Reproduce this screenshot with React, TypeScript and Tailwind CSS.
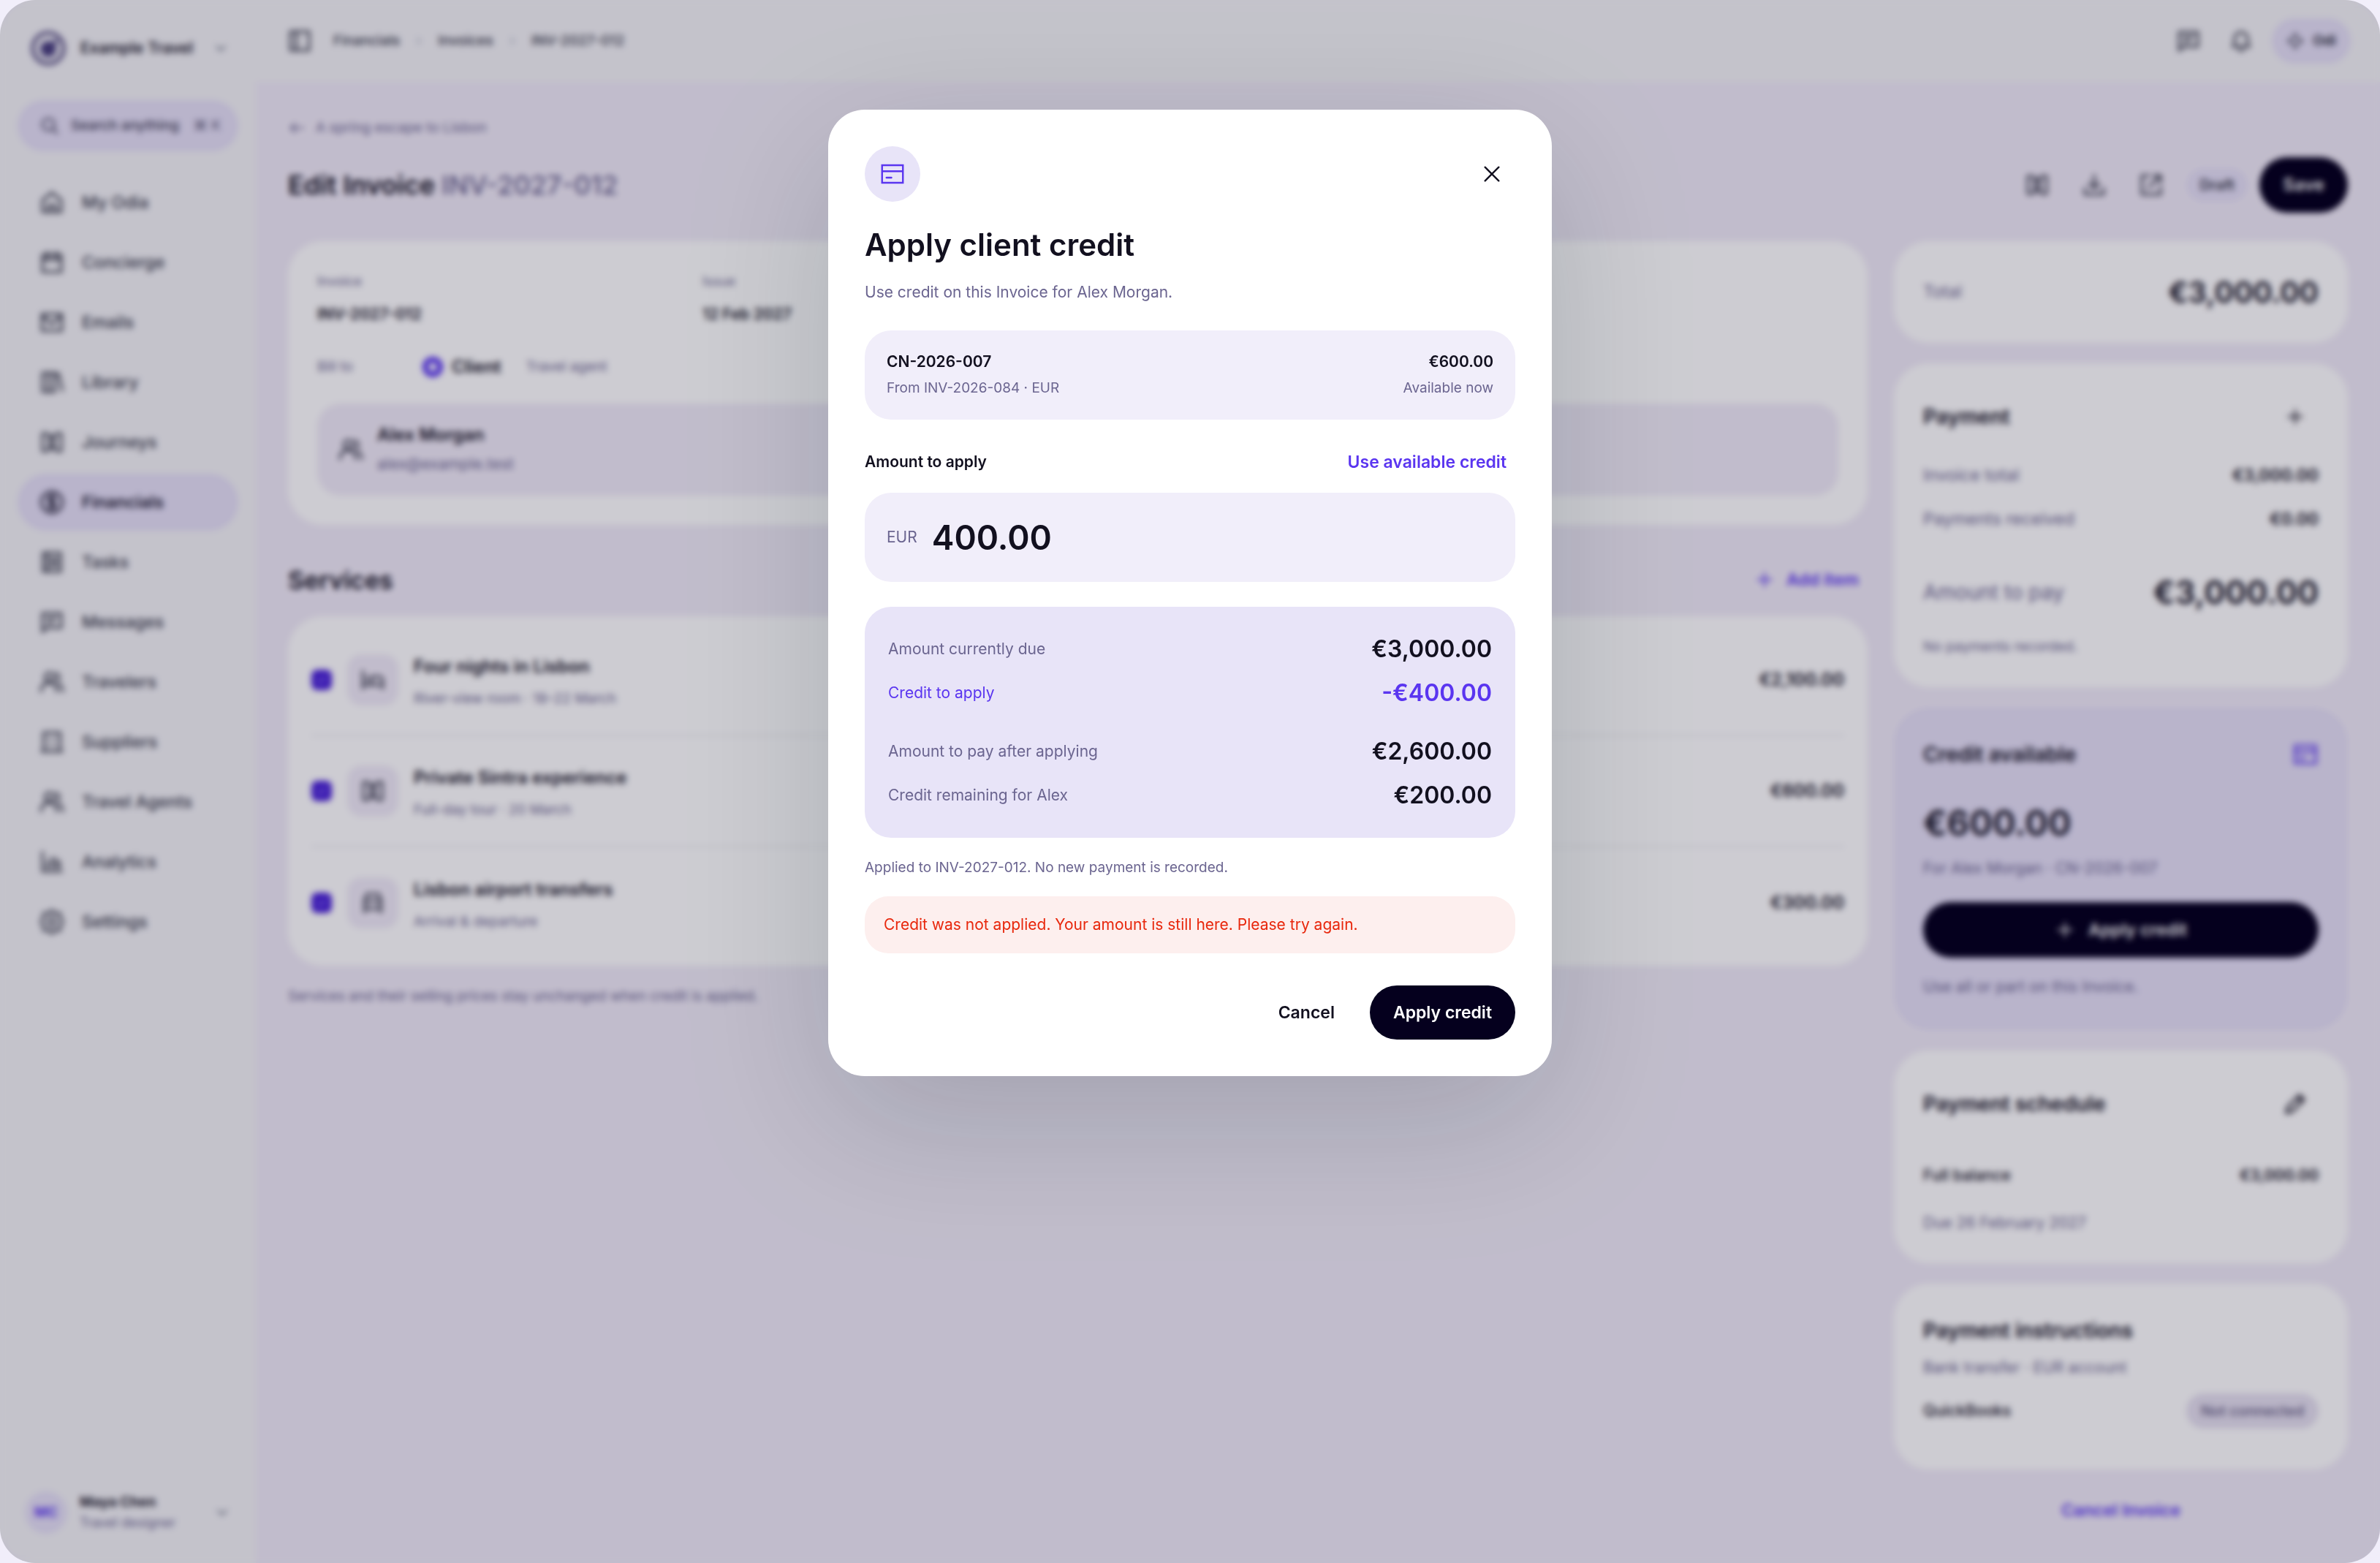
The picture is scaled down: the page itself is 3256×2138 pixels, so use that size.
import { useState } from 'react';
import type { ReactNode } from 'react';

const ICONS = {
  home: 'M3.5 10 12 3l8.5 7v10.5h-17zM9 20.5v-6h6v6',
  calendar: 'M3.5 5h17v15.5h-17zM3.5 9.5h17M8 2.5v4.5M16 2.5v4.5',
  mail: 'M3 4.5h18v15H3zM3 6l9 7.5L21 6',
  library: 'M3.5 3.5H9v17H3.5zM9 3.5h5.5v17H9zM15 5l3-1 3.5 15.5',
  map: 'M3.5 4H8l4 4 4-4h4.5v16H16l-4-4-4 4H3.5zM10 6v12M14 6v12',
  dollar: 'M12 2.5a9.5 9.5 0 1 0 0 19 9.5 9.5 0 0 0 0-19zM15 8.5c-.6-.9-1.7-1.4-3-1.4-1.7 0-3 .9-3 2.3 0 3.3 6 1.8 6 5 0 1.5-1.3 2.5-3 2.5-1.4 0-2.5-.6-3.1-1.5M12 5.5v13',
  tasks: 'M4 3.5h16v17H4zM8 3.5v17M11 8.5h6M11 12h6M11 15.5h6',
  message: 'M3.5 4h17v13H8l-4.5 3.5zM8 8.5h8M8 12.5h5',
  users: 'M9.5 3.5a4 4 0 1 0 0 8 4 4 0 0 0 0-8zM2 20.5c.5-5 2.5-8 7.5-8s7 3 7 8M15.5 3.8a4 4 0 0 1 1 7.4M18.5 13.5c2 1.3 3 3.500 3.500 7',
  building: 'M4.5 3.5h15v17h-15zM2.5 20.5h19M9.5 8v.1M14.5 8v.1M9.5 12v.1M14.5 12v.1M9.5 16v.1M14.5 16v.1',
  chart: 'M3.5 3v17.5H21M8 17v-5M12 17V8M16 17v-8M19 17v-5',
  settings: 'M12 1.5l2.8 2.9 4.5-.4.7 4.5 2 3.5-2 3.5-.7 4.5-4.5-.4L12 22.5l-2.8-2.9-4.5.4L4 15.5 2 12l2-3.5L4.7 4l4.5.4zM12 8.5a3.5 3.5 0 1 0 0 7 3.5 3.5 0 0 0 0-7z',
  search: 'M10.5 3.5a7 7 0 1 0 0 14 7 7 0 0 0 0-14zM15.5 15.5l5.5 5.5',
  chevronDown: 'M6 9l6 6 6-6',
  chevronRight: 'M9 6l6 6-6 6',
  panel: 'M3.5 3.5h17v17h-17zM9 3.5v17',
  bell: 'M6 17V10a6 6 0 0 1 12 0v7M4 17h16M10 20.5h4',
  sparkle: 'M12 2l3.500 6.500L22 12l-6.500 3.500L12 22l-3.500-6.500L2 12l6.500-3.500z',
  arrowLeft: 'M21 12H4M10 6l-6 6 6 6',
  download: 'M12 3v12M7.5 10.5 12 15l4.5-4.5M3.5 15v5.5h17V15',
  external: 'M10 3.5H3.5v17h17V14M14 3.5h6.5V10M20.5 3.5 10 14',
  plus: 'M12 4v16M4 12h16',
  bed: 'M3 4v16M3 16.5h18M21 20v-7.5c0-2-1-3.5-3.5-3.5H11v7.5M7 9.5v3',
  car: 'M4.5 20.5V9l2-5h11l2 5v11.5M4.5 10h15M4.5 17.5h15M8 13.8v.1M16 13.8v.1',
  pencil: 'M4 20l1-5L16 4l4 4L9 19zM14 6l4 4',
  close: 'M4 4l16 16M20 4 4 20',
  check: 'M6 12.5l4 4 8-9',
  card: 'M2.5 4h19v16h-19zM2.5 9.5h19M6.5 15.3H11',
};

type IconName = keyof typeof ICONS;

function Icon({ name, className, strokeWidth = 2 }: { name: IconName; className: string; strokeWidth?: number }) {
  return (
    <svg
      viewBox="0 0 24 24"
      fill="none"
      stroke="currentColor"
      strokeWidth={strokeWidth}
      strokeLinecap="round"
      className={`shrink-0 ${className}`}
      aria-hidden="true"
    >
      <path d={ICONS[name]} />
    </svg>
  );
}

const NAV: { label: string; icon: IconName }[] = [
  { label: 'My Odia', icon: 'home' },
  { label: 'Concierge', icon: 'calendar' },
  { label: 'Emails', icon: 'mail' },
  { label: 'Library', icon: 'library' },
  { label: 'Journeys', icon: 'map' },
  { label: 'Financials', icon: 'dollar' },
  { label: 'Tasks', icon: 'tasks' },
  { label: 'Messages', icon: 'message' },
  { label: 'Travelers', icon: 'users' },
  { label: 'Suppliers', icon: 'building' },
  { label: 'Travel Agents', icon: 'users' },
  { label: 'Analytics', icon: 'chart' },
  { label: 'Settings', icon: 'settings' },
];

const SERVICES: { title: string; detail: string; price: string; icon: IconName }[] = [
  { title: 'Four nights in Lisbon', detail: 'River-view room · 18–22 March', price: '€2,100.00', icon: 'bed' },
  { title: 'Private Sintra experience', detail: 'Full-day tour · 20 March', price: '€600.00', icon: 'map' },
  { title: 'Lisbon airport transfers', detail: 'Arrival & departure', price: '€300.00', icon: 'car' },
];

function Sidebar() {
  return (
    <aside className="flex w-[350px] shrink-0 flex-col bg-[#f4f4f7] px-6 pt-[42px] pb-10">
      <button className="flex h-12 items-center pl-[18px] text-left">
        <svg viewBox="0 0 48 48" className="size-12 shrink-0" aria-hidden="true">
          <circle cx="24" cy="24" r="21" fill="none" stroke="#5b5285" strokeWidth="5" />
          <circle cx="24" cy="25" r="11" fill="#4b4180" />
          <path d="M24 25 36 13" stroke="#4b4180" strokeWidth="5" />
        </svg>
        <span className="ml-5 text-[21px] leading-8 font-semibold text-[#1c1a2b]">Example Travel</span>
        <Icon name="chevronDown" className="ml-auto mr-3 size-6 text-gray-500" />
      </button>

      <button className="mt-[47px] flex h-[70px] items-center rounded-full bg-[#e6e1f7] pl-[30px] pr-6 text-[#3a3850]">
        <Icon name="search" className="size-7" />
        <span className="ml-[15px] text-[19px] font-medium whitespace-nowrap">Search anything</span>
        <span className="ml-auto text-[19px] text-[#5b5875]">⌘ K</span>
      </button>

      <nav className="mt-[31px] flex flex-col gap-1">
        {NAV.map((item) => (
          <a
            key={item.label}
            href="#"
            className={
              item.label === 'Financials'
                ? 'flex h-[78px] items-center gap-[23px] rounded-full bg-[#e6e1f7] pl-[29px] text-[23px] font-semibold text-[#1c1a30]'
                : 'flex h-[78px] items-center gap-[23px] rounded-full pl-[29px] text-[23px] font-medium text-[#363848]'
            }
          >
            <Icon name={item.icon} className="size-9" />
            {item.label}
          </a>
        ))}
      </nav>

      <button className="mt-auto flex items-center pl-[10px] text-left">
        <span className="flex size-[58px] items-center justify-center rounded-full bg-[#e6e1f7] text-[19px] font-bold text-[#5a35f0]">
          MC
        </span>
        <span className="ml-[17px] flex flex-col">
          <span className="text-[19px] leading-7 font-bold text-[#1c1a2b]">Maya Chen</span>
          <span className="text-lg leading-7 text-[#6b6590]">Travel designer</span>
        </span>
        <Icon name="chevronDown" className="ml-auto mr-[10px] size-6 text-gray-500" />
      </button>
    </aside>
  );
}

function TopBar() {
  return (
    <header className="flex h-28 shrink-0 items-center bg-[#f4f4f7] pl-[42px] pr-10 text-[#363848]">
      <button aria-label="Toggle sidebar">
        <Icon name="panel" className="size-9" />
      </button>
      <nav className="ml-7 flex items-center gap-[18px] text-[19px] font-medium">
        <a href="#">Financials</a>
        <Icon name="chevronRight" className="size-4 text-gray-400" />
        <a href="#">Invoices</a>
        <Icon name="chevronRight" className="size-4 text-gray-400" />
        <a href="#">INV-2027-012</a>
      </nav>
      <div className="ml-auto flex items-center gap-9">
        <button aria-label="Messages">
          <Icon name="message" className="size-9" />
        </button>
        <button aria-label="Notifications">
          <Icon name="bell" className="size-9" />
        </button>
        <button className="-ml-3 flex h-[62px] items-center gap-3 rounded-full bg-[#e6e1f7] px-5 text-[19px] font-bold">
          <Icon name="sparkle" className="size-6" />
          Odi
        </button>
      </div>
    </header>
  );
}

function Card({ className, children }: { className: string; children: ReactNode }) {
  return <section className={`flex flex-col rounded-[48px] px-10 ${className}`}>{children}</section>;
}

function InvoiceCard() {
  return (
    <Card className="bg-white py-10">
      <dl className="grid grid-cols-4 gap-[27px]">
        <div>
          <dt className="text-lg leading-[30px] text-[#6b6590]">Invoice</dt>
          <dd className="mt-3 text-[21px] leading-9 font-semibold">INV-2027-012</dd>
        </div>
        <div>
          <dt className="text-lg leading-[30px] text-[#6b6590]">Issue</dt>
          <dd className="mt-3 text-[21px] leading-9 font-semibold">12 Feb 2027</dd>
        </div>
      </dl>
      <div role="radiogroup" aria-labelledby="bill-to" className="mt-9 flex h-9 items-center">
        <span id="bill-to" className="w-[144px] text-[19px] text-[#6b6590]">
          Bill to
        </span>
        <label className="flex items-center gap-3 text-2xl font-semibold">
          <input
            type="radio"
            name="billTo"
            defaultChecked
            className="size-7 appearance-none rounded-full border-[8px] border-[#5a35f0] bg-white"
          />
          Client
        </label>
        <label className="relative ml-[34px] text-[19px] text-[#6b6590]">
          <input type="radio" name="billTo" className="sr-only" />
          Travel agent
        </label>
      </div>
      <div className="mt-8 flex h-[126px] items-center gap-[18px] rounded-[32px] bg-[#f1ecf8] pl-7">
        <Icon name="users" className="size-9 text-[#363848]" />
        <div>
          <p className="text-2xl leading-10 font-semibold">Alex Morgan</p>
          <p className="text-[21px] leading-10 text-[#6b6590]">alex@example.test</p>
        </div>
      </div>
    </Card>
  );
}

function Services() {
  return (
    <>
      <div className="mt-[45px] flex h-[60px] items-center justify-between">
        <h2 className="text-[34px] font-semibold">Services</h2>
        <button className="mr-3 flex items-center gap-4 text-[23px] font-semibold text-[#5a35f0]">
          <Icon name="plus" className="size-7" />
          Add item
        </button>
      </div>
      <ul className="mt-5 flex flex-col divide-y-2 divide-[#ebebf0] rounded-[48px] bg-white px-8 pt-3 pb-[10px]">
        {SERVICES.map((item) => (
          <li key={item.title} className="flex h-[152px] items-center">
            <span className="relative flex shrink-0">
              <input
                type="checkbox"
                defaultChecked
                aria-label={item.title}
                className="peer size-7 appearance-none rounded-lg border-2 border-[#4a22d8] checked:bg-[#4a22d8]"
              />
              <Icon
                name="check"
                className="pointer-events-none absolute inset-1 hidden size-5 text-[#a897f5] peer-checked:block"
              />
            </span>
            <span className="ml-[21px] flex size-[70px] shrink-0 items-center justify-center rounded-[20px] bg-[#f1ecf8] text-[#363848]">
              <Icon name={item.icon} className="size-9" />
            </span>
            <div className="ml-[21px] pt-2">
              <p className="text-2xl leading-10 font-semibold">{item.title}</p>
              <p className="mt-1 text-[19px] leading-10 text-[#6b6590]">{item.detail}</p>
            </div>
            <span className="ml-auto text-2xl font-semibold">{item.price}</span>
          </li>
        ))}
      </ul>
      <p className="mt-[27px] text-[19px] leading-[30px] text-[#6b6590]">
        Services and their selling prices stay unchanged when credit is applied.
      </p>
    </>
  );
}

function SidePanel() {
  return (
    <aside className="flex w-[621px] shrink-0 flex-col gap-7">
      <Card className="bg-white">
        <div className="flex h-[139px] items-center justify-between">
          <span className="text-[23px] text-[#6b6590]">Total</span>
          <span className="text-[40px] font-semibold">€3,000.00</span>
        </div>
      </Card>

      <Card className="bg-white pt-[45px] pb-10">
        <div className="flex h-14 items-center justify-between">
          <h2 className="text-[28px] font-semibold">Payment</h2>
          <button aria-label="Add payment" className="mr-[18px]">
            <Icon name="plus" className="size-7" />
          </button>
        </div>
        <div className="mt-8 flex h-10 items-center justify-between">
          <span className="text-[23px] text-[#6b6590]">Invoice total</span>
          <span className="text-[23px] font-semibold">€3,000.00</span>
        </div>
        <div className="mt-5 flex h-10 items-center justify-between">
          <span className="text-[23px] text-[#6b6590]">Payments received</span>
          <span className="text-[23px] font-semibold">€0.00</span>
        </div>
        <div className="mt-[50px] flex h-[60px] items-center justify-between">
          <span className="text-[28px] text-[#6b6590]">Amount to pay</span>
          <span className="text-[44px] font-semibold">€3,000.00</span>
        </div>
        <p className="mt-[30px] text-[19px] leading-[30px] text-[#6b6590]">No payments recorded.</p>
      </Card>

      <Card className="bg-[#e6e1f7] pt-9 pb-11">
        <div className="flex h-14 items-center justify-between">
          <h2 className="text-[28px] font-semibold">Credit available</h2>
          <Icon name="card" className="size-9 text-[#5a35f0]" />
        </div>
        <p className="mt-[34px] text-5xl leading-[64px] font-semibold">€600.00</p>
        <p className="mt-[15px] text-[21px] leading-[30px] text-[#6b6590]">For Alex Morgan · CN-2026-007</p>
        <button className="mt-[31px] flex h-[76px] items-center justify-center gap-[18px] rounded-full bg-[#05001e] text-[23px] font-semibold text-white">
          <Icon name="plus" className="size-7" />
          Apply credit
        </button>
        <p className="mt-[25px] text-[21px] leading-[30px] text-[#6b6590]">Use all or part on this Invoice.</p>
      </Card>

      <Card className="bg-white pt-[45px] pb-10">
        <div className="flex h-14 items-center justify-between">
          <h2 className="text-[28px] font-semibold">Payment schedule</h2>
          <button aria-label="Edit schedule" className="mr-[14px]">
            <Icon name="pencil" className="size-9" />
          </button>
        </div>
        <div className="mt-[50px] flex h-10 items-center justify-between text-[21px]">
          <span className="font-medium">Full balance</span>
          <span className="font-semibold">€3,000.00</span>
        </div>
        <p className="mt-[30px] text-[21px] leading-[30px] text-[#6b6590]">Due 26 February 2027</p>
      </Card>

      <Card className="bg-white pt-9 pb-14">
        <h2 className="text-[28px] leading-[56px] font-semibold">Payment instructions</h2>
        <p className="mt-2 text-[21px] leading-[30px] text-[#6b6590]">Bank transfer · EUR account</p>
        <div className="mt-5 flex h-12 items-center justify-between">
          <span className="text-[21px] font-medium">QuickBooks</span>
          <span className="flex h-12 items-center rounded-full bg-[#e6e1f0] px-5 text-xl font-medium text-[#5f587f]">
            Not connected
          </span>
        </div>
      </Card>

      <button className="mt-2 text-[23px] leading-10 font-semibold text-[#5a35f0]">Cancel Invoice</button>
    </aside>
  );
}

function SummaryRow({ label, value, accent }: { label: string; value: string; accent?: boolean }) {
  return (
    <div className={accent ? 'flex h-11 items-center justify-between text-[#5a35f0]' : 'flex h-11 items-center justify-between'}>
      <dt className={accent ? 'text-[21px]' : 'text-[21px] text-[#6b6590]'}>{label}</dt>
      <dd className="text-[32px] font-semibold">{value}</dd>
    </div>
  );
}

function CreditDialog() {
  const [amount, setAmount] = useState('400.00');

  return (
    <div
      role="dialog"
      aria-modal="true"
      aria-labelledby="dialog-title"
      className="flex w-[990px] flex-col rounded-[50px] bg-white p-[50px] text-[#12101f] shadow-[0_60px_200px_rgba(10,30,30,0.17)]"
    >
      <div className="flex items-center justify-between">
        <span className="flex size-[76px] items-center justify-center rounded-full bg-[#e8e4f8] text-[#5a35f0]">
          <Icon name="card" className="size-9" strokeWidth={1.6} />
        </span>
        <button aria-label="Close" className="mr-[18px]" onClick={() => setAmount('')}>
          <Icon name="close" className="size-7" />
        </button>
      </div>

      <h1 id="dialog-title" className="mt-[29px] text-[42px] leading-[60px] font-semibold">
        Apply client credit
      </h1>
      <p className="mt-[17px] text-[21px] leading-9 text-[#6b6590]">Use credit on this Invoice for Alex Morgan.</p>

      <div className="mt-[34px] flex h-[122px] items-center justify-between rounded-[36px] bg-[#f1eefa] px-[30px]">
        <div>
          <p className="text-[21px] leading-9 font-semibold">CN-2026-007</p>
          <p className="text-[19px] leading-9 text-[#6b6590]">From INV-2026-084 · EUR</p>
        </div>
        <div className="text-right">
          <p className="text-[21px] leading-9 font-semibold">€600.00</p>
          <p className="text-[19px] leading-9 text-[#6b6590]">Available now</p>
        </div>
      </div>

      <div className="mt-9 flex h-11 items-center justify-between">
        <label htmlFor="amount" className="text-[21px] font-semibold">
          Amount to apply
        </label>
        <button className="mr-3 text-[23px] font-semibold text-[#5a35f0]" onClick={() => setAmount('600.00')}>
          Use available credit
        </button>
      </div>
      <div className="mt-5 flex h-[122px] items-center gap-5 rounded-[36px] bg-[#f1eefa] px-[30px]">
        <span className="text-[21px] text-[#6b6590]">EUR</span>
        <input
          id="amount"
          value={amount}
          onChange={(e) => setAmount(e.target.value)}
          className="w-full bg-transparent text-[46px] font-semibold outline-none"
        />
      </div>

      <dl className="mt-[34px] flex flex-col gap-4 rounded-[36px] bg-[#e8e4f8] px-8 py-9">
        <SummaryRow label="Amount currently due" value="€3,000.00" />
        <SummaryRow label="Credit to apply" value="-€400.00" accent />
        <div className="mt-5">
          <SummaryRow label="Amount to pay after applying" value="€2,600.00" />
        </div>
        <SummaryRow label="Credit remaining for Alex" value="€200.00" />
      </dl>

      <p className="mt-[26px] text-[19px] leading-[30px] text-[#6b6590]">
        Applied to INV-2027-012. No new payment is recorded.
      </p>
      <p role="alert" className="mt-6 flex h-[78px] items-center rounded-[32px] bg-[#fdefee] px-[26px] text-[21px] text-[#e8270c]">
        Credit was not applied. Your amount is still here. Please try again.
      </p>

      <div className="mt-11 flex h-[74px] items-center justify-end gap-12 text-[23px] font-semibold">
        <button>Cancel</button>
        <button className="h-full rounded-full bg-[#05001e] px-8 text-white">Apply credit</button>
      </div>
    </div>
  );
}

export default function App() {
  return (
    <div className="min-h-screen bg-[#f1eefa] font-['Inter',sans-serif] text-[#12101f]">
      <div className="flex min-h-screen overflow-hidden rounded-[48px]">
        <Sidebar />
        <div className="flex min-w-0 flex-1 flex-col">
          <TopBar />
          <main className="flex-1 bg-[#f1ecf8] px-11 pt-[43px] pb-8">
            <a href="#" className="flex h-10 items-center gap-[14px] text-[19px] text-[#6b6590]">
              <Icon name="arrowLeft" className="size-6" />
              A spring escape to Lisbon
            </a>
            <div className="mt-5 flex h-[76px] items-center justify-between">
              <h1 className="text-4xl font-semibold">
                Edit Invoice <span className="font-medium text-[#6b6590]">INV-2027-012</span>
              </h1>
              <div className="flex items-center text-[#363848]">
                <div className="flex gap-[42px]">
                  <button aria-label="Preview">
                    <Icon name="map" className="size-9" />
                  </button>
                  <button aria-label="Download">
                    <Icon name="download" className="size-9" />
                  </button>
                  <button aria-label="Open in new tab">
                    <Icon name="external" className="size-9" />
                  </button>
                </div>
                <span className="ml-[30px] flex h-[46px] items-center rounded-full bg-[#e6e1f7] px-[18px] text-xl font-semibold">
                  Draft
                </span>
                <button className="ml-4 h-[76px] rounded-full bg-[#05001e] px-8 text-2xl font-semibold text-white">
                  Save
                </button>
              </div>
            </div>
            <div className="mt-[39px] flex gap-9">
              <div className="flex min-w-0 flex-1 flex-col">
                <InvoiceCard />
                <Services />
              </div>
              <SidePanel />
            </div>
          </main>
        </div>
      </div>

      <div className="fixed inset-0 flex items-start justify-center overflow-hidden rounded-[48px] bg-[#05001e]/20 pt-[150px] backdrop-blur-[4px]">
        <CreditDialog />
      </div>
    </div>
  );
}
